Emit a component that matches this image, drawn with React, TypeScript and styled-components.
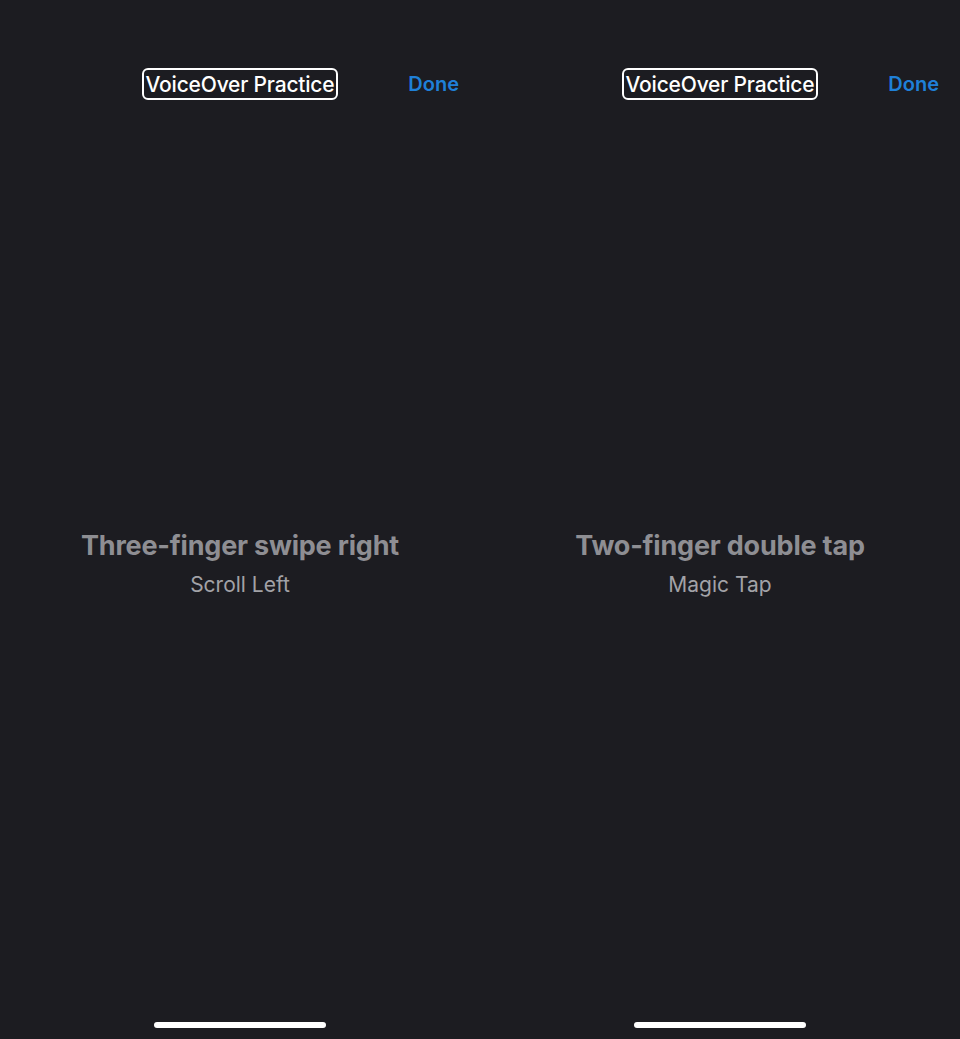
import React from "react";
import styled, { createGlobalStyle } from "styled-components";

const Global = createGlobalStyle`
  html, body { margin: 0; padding: 0; background: #1c1c21; }
  body { font-family: Inter, "Noto Sans", "Liberation Sans", sans-serif; }
`;

const Screen = styled.div`
  display: grid;
  grid-template-columns: 1fr 1fr;
  width: 960px;
  height: 1039px;
  background: #1c1c21;
  overflow: hidden;
`;

const Panel = styled.section`
  display: flex;
  flex-direction: column;
  height: 100%;
`;

const Header = styled.header`
  display: grid;
  grid-template-columns: 1fr auto 1fr;
  align-items: center;
  margin-top: 68px;
  height: 32px;
`;

const TitleBox = styled.div`
  grid-column: 2;
  box-sizing: border-box;
  height: 32px;
  padding: 0 2px;
  border: 2px solid #ffffff;
  border-radius: 6px;
  display: flex;
  align-items: center;
  color: #ffffff;
  font-size: 21px;
  font-weight: 500;
  letter-spacing: -0.2px;
  white-space: nowrap;
`;

const DoneButton = styled.button`
  grid-column: 3;
  justify-self: end;
  margin-right: 21px;
  background: none;
  border: none;
  padding: 0;
  font-family: inherit;
  color: #1f80d8;
  font-size: 20px;
  font-weight: 600;
  cursor: pointer;
`;

const Main = styled.main`
  flex: 1;
  display: flex;
  flex-direction: column;
  align-items: center;
  justify-content: center;
  gap: 11px;
  padding-top: 5px;
`;

const Gesture = styled.h2`
  margin: 0;
  color: #8e8e93;
  font-size: 27px;
  font-weight: 700;
  line-height: 32px;
  letter-spacing: -0.2px;
`;

const Action = styled.p`
  margin: 0;
  color: #a2a2a7;
  font-size: 21px;
  font-weight: 400;
  line-height: 24px;
`;

const HomeBar = styled.div`
  align-self: center;
  width: 172px;
  height: 6px;
  border-radius: 3px;
  background: #ffffff;
  margin-bottom: 11px;
`;

const items = [
  { gesture: "Three-finger swipe right", action: "Scroll Left" },
  { gesture: "Two-finger double tap", action: "Magic Tap" },
];

export default function App() {
  return (
    <>
      <Global />
      <Screen>
        {items.map((it) => (
          <Panel key={it.gesture}>
            <Header>
              <TitleBox>VoiceOver Practice</TitleBox>
              <DoneButton>Done</DoneButton>
            </Header>
            <Main>
              <Gesture>{it.gesture}</Gesture>
              <Action>{it.action}</Action>
            </Main>
            <HomeBar />
          </Panel>
        ))}
      </Screen>
    </>
  );
}
